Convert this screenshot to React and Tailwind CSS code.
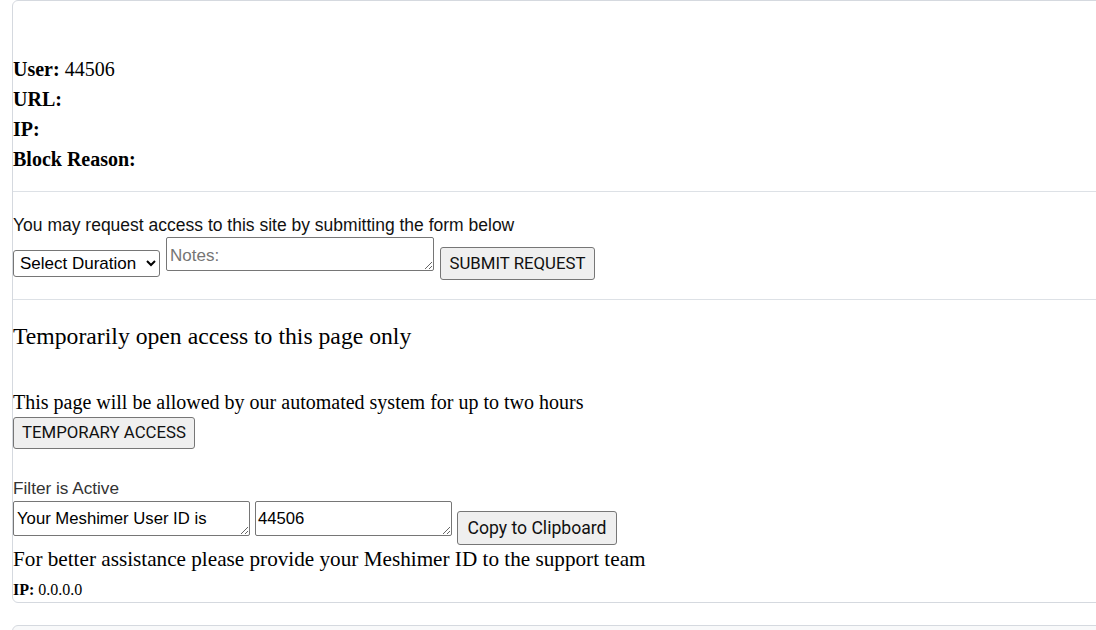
const serif = { fontFamily: '"Liberation Serif", "Times New Roman", serif' };

export default function App() {
    return (
        <div className="w-full h-[630px] overflow-hidden bg-white text-black" style={serif}>
            {/* Block info card */}
            <div className="ml-[12px] mr-[-20px] border border-[#d5d9df] rounded-md pt-[53px] pb-[2px]">
                <div className="text-[20px] leading-[30px]">
                    <p><b>User:</b> 44506</p>
                    <p><b>URL:</b></p>
                    <p><b>IP:</b></p>
                    <p><b>Block Reason:</b></p>
                </div>

                <hr className="mt-[17px] border-0 border-t border-[#dde1e6]" />

                {/* Request form */}
                <div className="font-['Liberation_Sans',Arial,sans-serif]">
                    <p className="mt-[21px] text-[17.5px] leading-[24px] text-[#111]">
                        You may request access to this site by submitting the form below
                    </p>
                    <div className="flex items-start gap-[6px]">
                        <select className="mt-[13px] w-[147px] h-[27px] border border-[#767676] rounded-[3px] bg-white text-[17px] pl-[2px]">
                            <option>Select Duration</option>
                            <option>1 Hour</option>
                            <option>1 Day</option>
                        </select>
                        <textarea
                            placeholder="Notes:"
                            className="w-[268px] h-[34px] border border-[#767676] rounded-[2px] px-[3px] pt-[8px] pb-0 text-[17px] leading-[20px] placeholder:text-[#757575]"
                        ></textarea>
                        <button className="mt-[10px] w-[155px] h-[33px] border border-[#767676] rounded-[3px] bg-[#efefef] text-[16.8px] text-[#111] font-['Roboto',Arial,sans-serif]">
                            SUBMIT REQUEST
                        </button>
                    </div>
                </div>

                <hr className="mt-[19px] border-0 border-t border-[#dde1e6]" />

                {/* Temporary access */}
                <p className="mt-[21px] text-[23.7px] leading-[30px]">Temporarily open access to this page only</p>
                <p className="mt-[39px] text-[20px] leading-[24px]">
                    This page will be allowed by our automated system for up to two hours
                </p>
                <button className="mt-[3px] w-[182px] h-[32px] border border-[#767676] rounded-[3px] bg-[#efefef] text-[16.8px] text-[#111] font-['Roboto',Arial,sans-serif]">
                    TEMPORARY ACCESS
                </button>

                {/* Filter status */}
                <div className="font-['Liberation_Sans',Arial,sans-serif]">
                    <p className="mt-[27px] text-[17.2px] leading-[24px] text-[#333]">Filter is Active</p>
                    <div className="mt-[1px] flex items-start gap-[5px]">
                        <textarea
                            readOnly
                            value="Your Meshimer User ID is"
                            className="w-[237px] h-[35px] border border-[#767676] rounded-[2px] px-[3px] pt-[7px] text-[16.7px] leading-[20px] overflow-hidden"
                        ></textarea>
                        <textarea
                            readOnly
                            value="44506"
                            className="w-[197px] h-[35px] border border-[#767676] rounded-[2px] px-[2px] pt-[7px] text-[16.7px] leading-[20px] overflow-hidden"
                        ></textarea>
                        <button className="mt-[10px] w-[160px] h-[34px] border border-[#767676] rounded-[3px] bg-[#efefef] text-[17.6px] text-[#111] font-['Roboto',Arial,sans-serif]">
                            Copy to Clipboard
                        </button>
                    </div>
                </div>

                <p className="mt-[1px] text-[21.2px] leading-[26px]">
                    For better assistance please provide your Meshimer ID to the support team
                </p>
                <p className="mt-[8px] text-[16px] leading-[20px]"><b>IP:</b> 0.0.0.0</p>
            </div>

            {/* Next card */}
            <div className="mt-[22px] ml-[12px] mr-[-20px] h-[60px] border border-[#d5d9df] rounded-md bg-[#f8f9fa]"></div>
        </div>
    );
}
